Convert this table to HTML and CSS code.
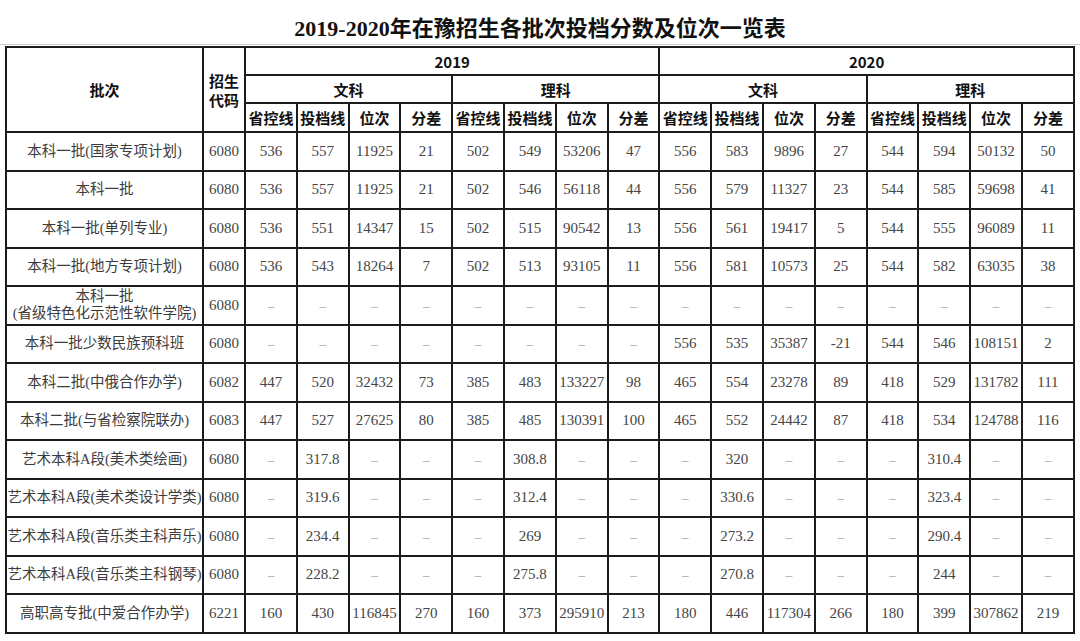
FILE: index.html
```html
<!DOCTYPE html>
<html lang="zh-CN">
<head>
<meta charset="utf-8">
<title>2019-2020年在豫招生各批次投档分数及位次一览表</title>
<link rel="stylesheet" href="styles.css">
</head>
<body>
<div class="page">
  <h1 class="title">2019-2020年在豫招生各批次投档分数及位次一览表</h1>
  <div class="rule"></div>
  <table class="grid">
    <colgroup>
      <col class="c-name"><col class="c-code">
      <col class="c-d"><col class="c-d"><col class="c-d"><col class="c-d">
      <col class="c-d"><col class="c-d"><col class="c-d"><col class="c-d">
      <col class="c-d"><col class="c-d"><col class="c-d"><col class="c-d">
      <col class="c-d"><col class="c-d"><col class="c-d"><col class="c-d">
    </colgroup>
    <thead>
      <tr class="hr1">
        <th rowspan="3">批次</th>
        <th rowspan="3" class="code-h">招生<br>代码</th>
        <th colspan="8">2019</th>
        <th colspan="8">2020</th>
      </tr>
      <tr class="hr2">
        <th colspan="4">文科</th><th colspan="4">理科</th>
        <th colspan="4">文科</th><th colspan="4">理科</th>
      </tr>
      <tr class="hr3">
        <th>省控线</th><th>投档线</th><th>位次</th><th>分差</th>
        <th>省控线</th><th>投档线</th><th>位次</th><th>分差</th>
        <th>省控线</th><th>投档线</th><th>位次</th><th>分差</th>
        <th>省控线</th><th>投档线</th><th>位次</th><th>分差</th>
      </tr>
    </thead>
    <tbody>
      <tr><td class="name">本科一批(国家专项计划)</td><td>6080</td>
        <td>536</td><td>557</td><td>11925</td><td>21</td>
        <td>502</td><td>549</td><td>53206</td><td>47</td>
        <td>556</td><td>583</td><td>9896</td><td>27</td>
        <td>544</td><td>594</td><td>50132</td><td>50</td></tr>
      <tr><td class="name">本科一批</td><td>6080</td>
        <td>536</td><td>557</td><td>11925</td><td>21</td>
        <td>502</td><td>546</td><td>56118</td><td>44</td>
        <td>556</td><td>579</td><td>11327</td><td>23</td>
        <td>544</td><td>585</td><td>59698</td><td>41</td></tr>
      <tr><td class="name">本科一批(单列专业)</td><td>6080</td>
        <td>536</td><td>551</td><td>14347</td><td>15</td>
        <td>502</td><td>515</td><td>90542</td><td>13</td>
        <td>556</td><td>561</td><td>19417</td><td>5</td>
        <td>544</td><td>555</td><td>96089</td><td>11</td></tr>
      <tr><td class="name">本科一批(地方专项计划)</td><td>6080</td>
        <td>536</td><td>543</td><td>18264</td><td>7</td>
        <td>502</td><td>513</td><td>93105</td><td>11</td>
        <td>556</td><td>581</td><td>10573</td><td>25</td>
        <td>544</td><td>582</td><td>63035</td><td>38</td></tr>
      <tr><td class="name two">本科一批<br>(省级特色化示范性软件学院)</td><td>6080</td>
        <td class="d">–</td><td class="d">–</td><td class="d">–</td><td class="d">–</td>
        <td class="d">–</td><td class="d">–</td><td class="d">–</td><td class="d">–</td>
        <td class="d">–</td><td class="d">–</td><td class="d">–</td><td class="d">–</td>
        <td class="d">–</td><td class="d">–</td><td class="d">–</td><td class="d">–</td></tr>
      <tr><td class="name">本科一批少数民族预科班</td><td>6080</td>
        <td class="d">–</td><td class="d">–</td><td class="d">–</td><td class="d">–</td>
        <td class="d">–</td><td class="d">–</td><td class="d">–</td><td class="d">–</td>
        <td>556</td><td>535</td><td>35387</td><td>-21</td>
        <td>544</td><td>546</td><td>108151</td><td>2</td></tr>
      <tr><td class="name">本科二批(中俄合作办学)</td><td>6082</td>
        <td>447</td><td>520</td><td>32432</td><td>73</td>
        <td>385</td><td>483</td><td>133227</td><td>98</td>
        <td>465</td><td>554</td><td>23278</td><td>89</td>
        <td>418</td><td>529</td><td>131782</td><td>111</td></tr>
      <tr><td class="name">本科二批(与省检察院联办)</td><td>6083</td>
        <td>447</td><td>527</td><td>27625</td><td>80</td>
        <td>385</td><td>485</td><td>130391</td><td>100</td>
        <td>465</td><td>552</td><td>24442</td><td>87</td>
        <td>418</td><td>534</td><td>124788</td><td>116</td></tr>
      <tr><td class="name">艺术本科A段(美术类绘画)</td><td>6080</td>
        <td class="d">–</td><td>317.8</td><td class="d">–</td><td class="d">–</td>
        <td class="d">–</td><td>308.8</td><td class="d">–</td><td class="d">–</td>
        <td class="d">–</td><td>320</td><td class="d">–</td><td class="d">–</td>
        <td class="d">–</td><td>310.4</td><td class="d">–</td><td class="d">–</td></tr>
      <tr><td class="name">艺术本科A段(美术类设计学类)</td><td>6080</td>
        <td class="d">–</td><td>319.6</td><td class="d">–</td><td class="d">–</td>
        <td class="d">–</td><td>312.4</td><td class="d">–</td><td class="d">–</td>
        <td class="d">–</td><td>330.6</td><td class="d">–</td><td class="d">–</td>
        <td class="d">–</td><td>323.4</td><td class="d">–</td><td class="d">–</td></tr>
      <tr><td class="name">艺术本科A段(音乐类主科声乐)</td><td>6080</td>
        <td class="d">–</td><td>234.4</td><td class="d">–</td><td class="d">–</td>
        <td class="d">–</td><td>269</td><td class="d">–</td><td class="d">–</td>
        <td class="d">–</td><td>273.2</td><td class="d">–</td><td class="d">–</td>
        <td class="d">–</td><td>290.4</td><td class="d">–</td><td class="d">–</td></tr>
      <tr><td class="name">艺术本科A段(音乐类主科钢琴)</td><td>6080</td>
        <td class="d">–</td><td>228.2</td><td class="d">–</td><td class="d">–</td>
        <td class="d">–</td><td>275.8</td><td class="d">–</td><td class="d">–</td>
        <td class="d">–</td><td>270.8</td><td class="d">–</td><td class="d">–</td>
        <td class="d">–</td><td>244</td><td class="d">–</td><td class="d">–</td></tr>
      <tr><td class="name">高职高专批(中爱合作办学)</td><td>6221</td>
        <td>160</td><td>430</td><td>116845</td><td>270</td>
        <td>160</td><td>373</td><td>295910</td><td>213</td>
        <td>180</td><td>446</td><td>117304</td><td>266</td>
        <td>180</td><td>399</td><td>307862</td><td>219</td></tr>
    </tbody>
  </table>
</div>
</body>
</html>
```

FILE: styles.css
```css
html, body {
  margin: 0;
  padding: 0;
  background: #ffffff;
}

.page {
  width: 1080px;
  height: 641px;
  overflow: hidden;
  background: #ffffff;
}

.title {
  margin: 0;
  height: 44px;
  box-sizing: border-box;
  display: flex;
  align-items: center;
  justify-content: center;
  padding-top: 7px;
  font-family: "Liberation Serif", "Noto Sans CJK SC", serif;
  font-size: 22px;
  font-weight: 700;
  color: #111111;
}

.rule {
  height: 1px;
  background: #cfcfcf;
  margin: 0 0 1px 0;
}

.grid {
  margin-left: 5px;
  width: 1069px;
  table-layout: fixed;
  border-collapse: collapse;
  border: 2px solid #1c1c1c;
}

.c-name { width: 197px; }
.c-code { width: 42px; }
.c-d { width: 51.8px; }

.grid th,
.grid td {
  border: 2px solid #1c1c1c;
  padding: 0;
  text-align: center;
  vertical-align: middle;
  white-space: nowrap;
  overflow: visible;
}

.grid th {
  font-family: "Noto Sans CJK SC", sans-serif;
  font-weight: 700;
  font-size: 15px;
  line-height: 17px;
  color: #111111;
}

.hr1 { height: 28px; }
.hr2 { height: 28px; }
.hr3 { height: 29px; }

.grid th.code-h {
  white-space: normal;
  line-height: 19px;
}

.grid td {
  font-family: "Liberation Serif", "Noto Sans CJK SC", serif;
  font-size: 15px;
  line-height: 17px;
  color: #454545;
}

.grid tbody tr {
  height: 38.5px;
}

.grid td.name {
  font-size: 14.5px;
  color: #3c3c3c;
}

.grid td.two {
  line-height: 17px;
}

.grid td.d {
  color: #9a9a9a;
  font-size: 13px;
}
```
